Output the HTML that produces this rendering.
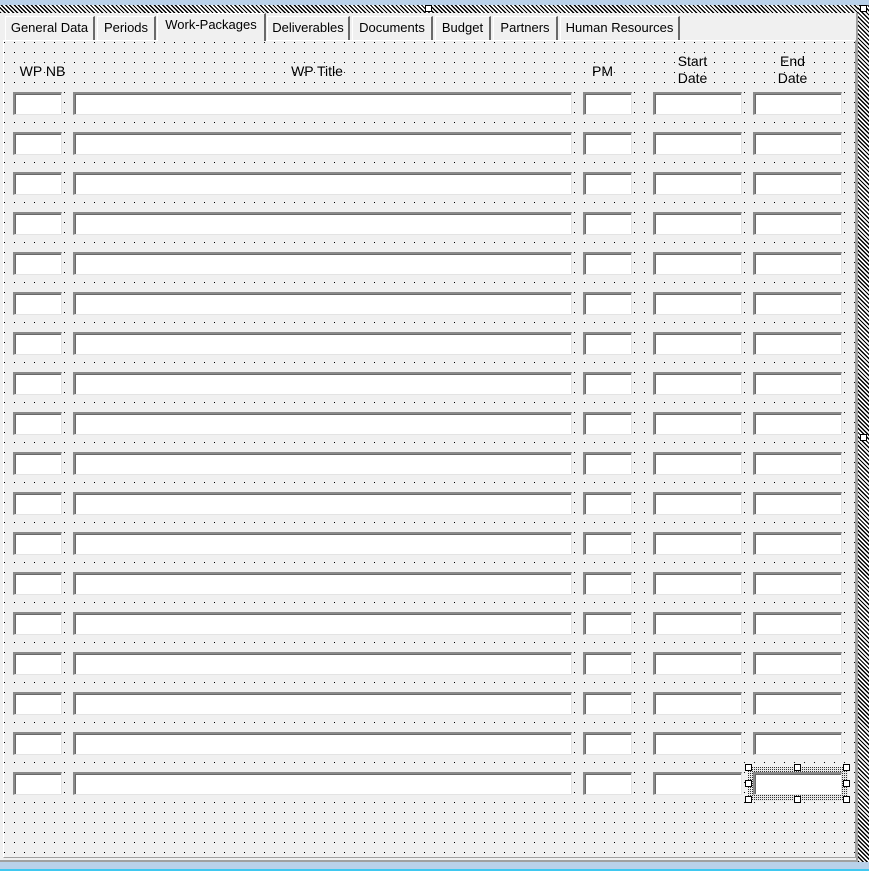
<!DOCTYPE html>
<html><head><style>
*{margin:0;padding:0;box-sizing:border-box}
body{width:869px;height:871px;background:#f0f0f0;position:relative;overflow:hidden;font-family:"Liberation Sans",sans-serif;font-size:13px;color:#000}
.topbar{position:absolute;left:0;top:0;width:869px;height:5px;background:#b9d1ea}
.hatchT{position:absolute;left:0;top:5px;width:869px;height:8px;background:repeating-linear-gradient(45deg,#000 0 1.3px,#fff 1.3px 3px)}
.hatchR{position:absolute;left:858px;top:5px;width:11px;height:857px;background:repeating-linear-gradient(45deg,#000 0 1.3px,#fff 1.3px 3px)}
.form{position:absolute;left:0;top:13px;width:858px;height:849px;background:#f0f0f0;border-right:2px solid #a0a0a0;border-bottom:2px solid #a0a0a0}
.panel{position:absolute;left:3px;top:40px;width:853px;height:818px;border-top:1px solid #fff;border-left:1px solid #fff;border-right:1px solid #a0a0a0;border-bottom:1px solid #a0a0a0;
background-color:#f0f0f0;background-image:radial-gradient(circle at 0.5px 0.5px,#000 0.6px,transparent 0.7px);background-size:10px 10px;background-position:0px 1px}
.tab{position:absolute;top:16px;height:24px;background:#f0f0f0;border-top:1px solid #fff;border-left:1px solid #fff;border-right:2px solid #696969;font-size:13px;line-height:22px;text-align:center}
.tab.sel{top:13px;height:28px;line-height:22px;z-index:2}
.bot{position:absolute;left:0;top:862px;width:869px;height:7px;background:#b9d1ea}
.bot2{position:absolute;left:0;top:869px;width:869px;height:2px;background:#3fc8f0}
.lbl{position:absolute;text-align:center;font-size:14px;line-height:17px}
.tb{position:absolute;height:23px;background:#fff;border-top:2px solid #8a8a8a;border-left:2px solid #8a8a8a;border-right:1px solid #e3e3e3;border-bottom:1px solid #e3e3e3;box-shadow:inset 1px 1px 0 #696969}
.sel-box{position:absolute;left:748px;top:767px;width:100px;height:34px;background-color:#e8e8e8;background-image:radial-gradient(circle at 0.5px 0.5px,#333 0.6px,transparent 0.7px);background-size:2px 2px}
.h{position:absolute;width:7px;height:7px;background:#fff;border:1px solid #000}
</style></head><body>
<div class="topbar"></div>
<div class="hatchT"></div>
<div class="form"></div>
<div class="hatchR"></div>
<div class="h" style="left:425px;top:5px"></div>
<div class="h" style="left:860px;top:5px"></div>
<div class="h" style="left:860px;top:434px"></div>
<div class="panel"></div>
<div class="tab" style="left:5px;width:90px">General Data</div>
<div class="tab" style="left:97px;width:59px">Periods</div>
<div class="tab sel" style="left:157px;width:109px">Work-Packages</div>
<div class="tab" style="left:267px;width:83px">Deliverables</div>
<div class="tab" style="left:352px;width:81px">Documents</div>
<div class="tab" style="left:435px;width:56px">Budget</div>
<div class="tab" style="left:493px;width:65px">Partners</div>
<div class="tab" style="left:560px;width:120px">Human Resources</div>
<div class="lbl" style="left:14px;top:63px;width:57px">WP NB</div>
<div class="lbl" style="left:74px;top:63px;width:486px">WP Title</div>
<div class="lbl" style="left:584px;top:63px;width:37px">PM</div>
<div class="lbl" style="left:654px;top:53px;width:77px">Start<br>Date</div>
<div class="lbl" style="left:754px;top:53px;width:77px">End<br>Date</div>
<div id="rows"></div>
<script>
var h='';for(var i=0;i<18;i++){var y=92+i*40;
h+='<div class="tb" style="left:13px;top:'+y+'px;width:49px"></div>';
h+='<div class="tb" style="left:73px;top:'+y+'px;width:499px"></div>';
h+='<div class="tb" style="left:583px;top:'+y+'px;width:49px"></div>';
h+='<div class="tb" style="left:653px;top:'+y+'px;width:89px"></div>';
if(i<17)h+='<div class="tb" style="left:753px;top:'+y+'px;width:89px"></div>';}
h+='<div class="sel-box"></div><div class="tb" style="left:753px;top:772px;width:89px"></div>';
var hp=[[745,764],[794,764],[843,764],[745,780],[843,780],[745,796],[794,796],[843,796]];
hp.forEach(function(p){h+='<div class="h" style="left:'+p[0]+'px;top:'+p[1]+'px"></div>'});
document.getElementById('rows').innerHTML=h;
</script>
<div class="bot"></div><div class="bot2"></div>
</body></html>
